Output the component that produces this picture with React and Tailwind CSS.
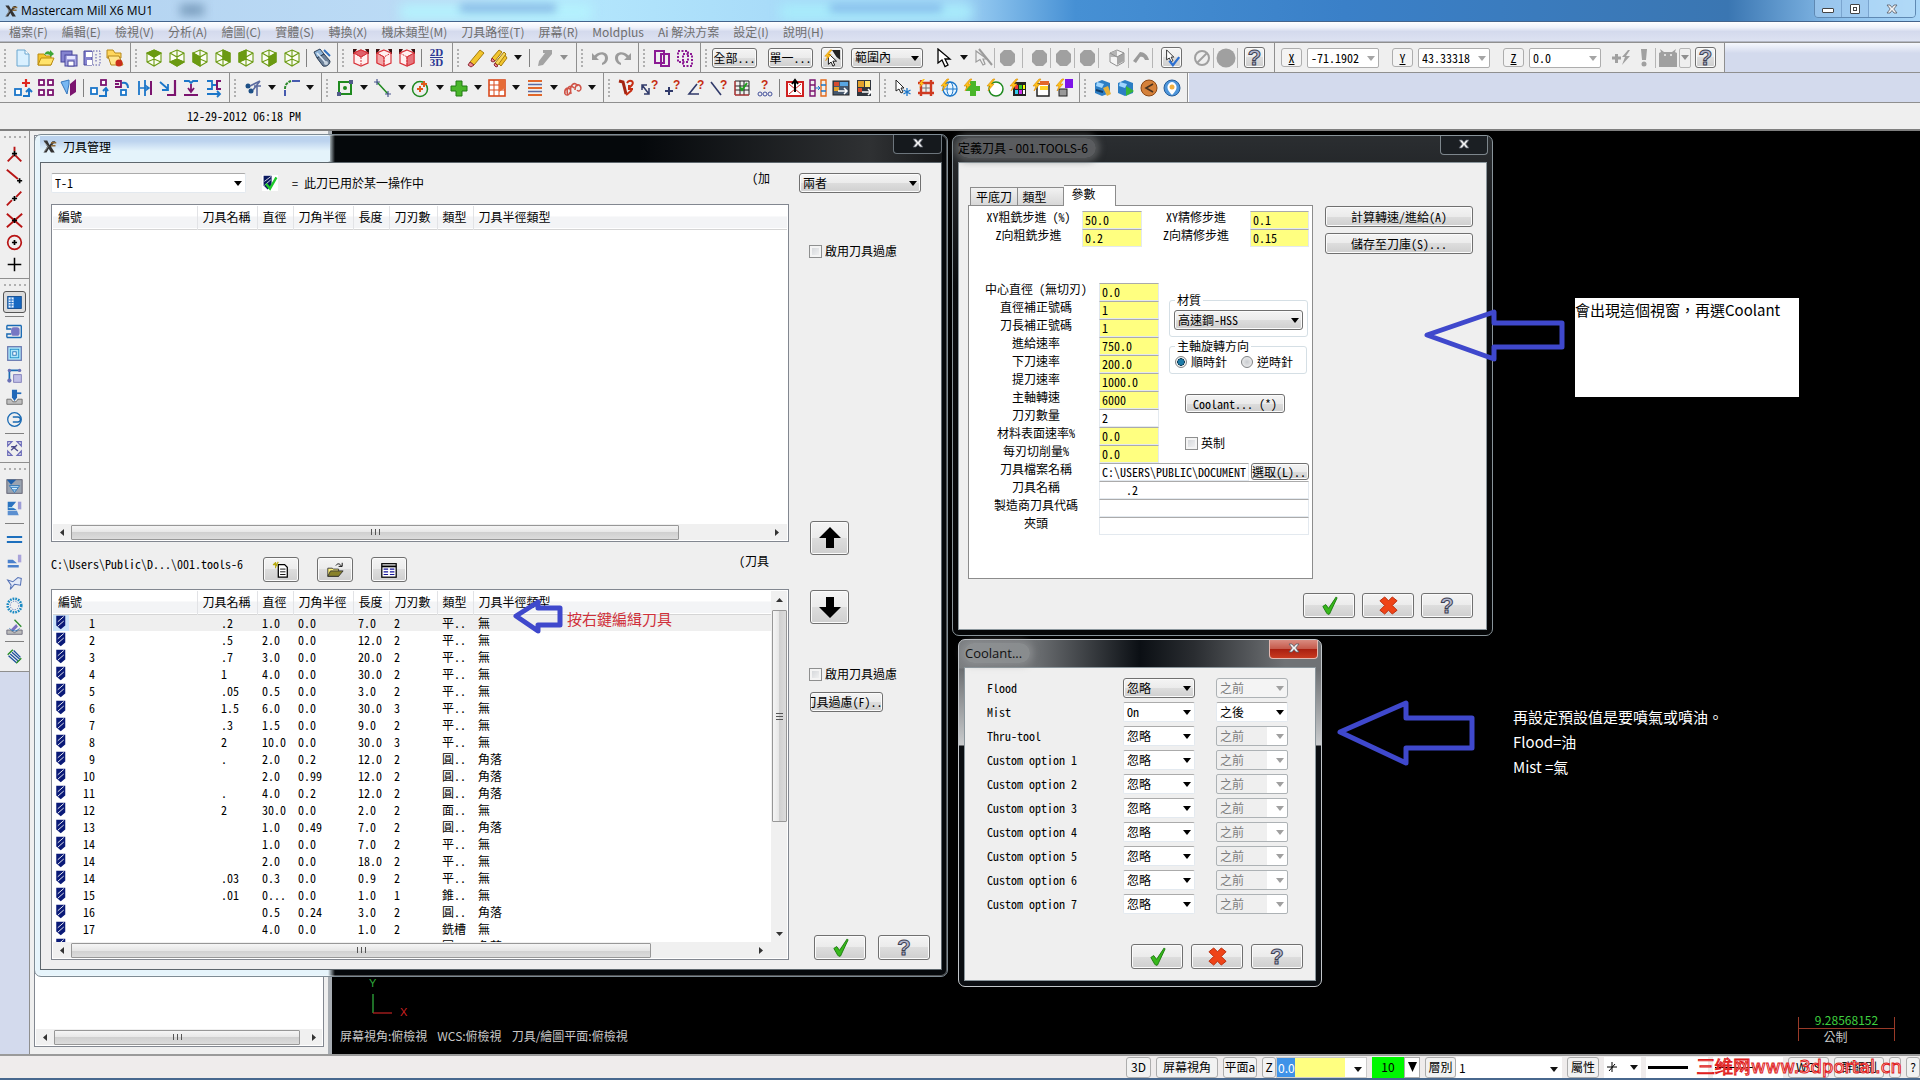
import React from "react";

const BTN =
  "border border-[#707070] rounded-[3px] bg-[linear-gradient(to_bottom,#f4f4f4_0%,#ebebeb_50%,#dddddd_50%,#cfcfcf_100%)] shadow-[inset_0_0_0_1px_#fbfbfb]";
const INPUT = "border border-[#e3e9ef] border-t-[#ababab] bg-white text-black outline-none";

/* ---------- icon drawings, all on a 20 x 20 grid ---------- */

function Ico({ children, size = 20 }) {
  return (
    <svg width={size} height={size} viewBox="0 0 20 20" fill="none" className="shrink-0" aria-hidden="true">
      {children}
    </svg>
  );
}

const FACES = {
  top: "10,2 17,5 10,9 3,5",
  bottom: "3,14 10,11 17,14 10,18",
  left: "3,5 10,9 10,18 3,14",
  right: "17,5 10,9 10,18 17,14",
  backLeft: "3,5 10,2 10,11 3,14",
  backRight: "10,2 17,5 17,14 10,11",
};

function Cube({ face, color = "#6b9a12" }) {
  return (
    <g stroke={color} strokeWidth="1.1">
      <path d="M10 2 17 5V14L10 18 3 14V5Z" fill="#fbfdf3" />
      <path d="M3 5 10 9 17 5M10 9V18M10 2V11M3 14 10 11 17 14" />
      {face && <polygon points={FACES[face]} fill={color} />}
    </g>
  );
}

function RedCube({ face }) {
  return (
    <g>
      <path d="M2 1H6L3 6H2ZM14 1H18V6H17Z" fill="#3a1212" />
      <path d="M10 2 17 5V15L10 18 3 15V5Z" fill="#fff0f0" stroke="#d8333a" strokeWidth="1.2" />
      {face === "top" && <path d="M10 2 17 5 10 9 3 5Z" fill="#e0606a" stroke="#d8333a" />}
      {face === "left" && <path d="M3 5 10 9V18L3 15Z" fill="#f2a5a8" stroke="#d8333a" />}
      {face === "right" && <path d="M10 9 17 5V15L10 18Z" fill="#e5737b" stroke="#d8333a" />}
      <path d="M3 5 10 9 17 5M10 9V18" stroke="#d8333a" strokeDasharray="2 1" />
    </g>
  );
}

const Q = ({ x = 9, y = 11 }) => (
  <text x={x} y={y} fontSize="12" fontWeight="700" fill="#c62d12" fontFamily="Liberation Sans">?</text>
);
const Bolt = () => <path d="M8 1 2 8H5L3 13 9 6H6L10 1Z" fill="#ffc21a" stroke="#d98a00" strokeWidth=".6" />;
const Sq = ({ x, y, c, s = 6 }) => <rect x={x} y={y} width={s} height={s} fill="#fff" stroke={c} strokeWidth="1.8" />;

const ICONS = {
  newDoc: <><path d="M4 2H12L16 6V18H4Z" fill="#d9f0ff" stroke="#6ba6cf" /><path d="M12 2V6H16" fill="#fff" stroke="#6ba6cf" /></>,
  open: <><path d="M2 6H8L10 8H15V17H2Z" fill="#f4c52e" stroke="#b98a10" /><path d="M5 10H18L15 17H2Z" fill="#ffe36b" stroke="#b98a10" /><path d="M8 7C10 2 13 3 14 4V2L18 6 14 9V7C12 6 10 6 8 7Z" fill="#3ea636" /></>,
  saveAll: <><rect x="2" y="3" width="11" height="11" fill="#8483cf" stroke="#48479b" /><rect x="6" y="7" width="12" height="11" fill="#a7a6e2" stroke="#48479b" /><rect x="9" y="13" width="6" height="5" fill="#fff" stroke="#48479b" /><rect x="8" y="8" width="8" height="3" fill="#e5e5ff" /></>,
  savePart: <><path d="M2 3H10V17H2Z" fill="#8584cf" stroke="#48479b" /><rect x="4" y="4" width="6" height="5" fill="#fff" /><rect x="5" y="12" width="5" height="5" fill="#fff" /><path d="M11 3H18V17H11M14 6V14" stroke="#5554a8" strokeDasharray="1.5 1.5" /></>,
  fileBox: <><path d="M2 2H8L10 5H16V10H2Z" fill="#ffd65c" stroke="#b5881c" /><path d="M3 8H14L18 17H6Z" fill="#ffe48a" stroke="#b5881c" /><circle cx="14" cy="15" r="3.5" fill="#c92d1a" /></>,
  shade: <><path d="M2 4 8 1 12 6 5 10Z" fill="#8fb4d8" stroke="#2c3f57" /><path d="M5 10 12 6 18 13C18 17 14 19 11 18Z" fill="#6d8199" stroke="#2c3f57" /><path d="M5 5 14 15" stroke="#dce8f4" strokeWidth="1.6" /><path d="M12 2 18 8" stroke="#2f70c0" strokeWidth="2" /><circle cx="14" cy="15" r="2" fill="#c6d3e0" /></>,
  pencil: <><path d="M4 14 14 2 18 5 8 17Z" fill="#f2c52d" stroke="#a57c0c" /><path d="M4 14 8 17 5 19 2 17Z" fill="#f08a92" stroke="#8c2b33" /></>,
  pencils: <><path d="M3 10 10 2 13 4 6 13Z" fill="#f2c52d" stroke="#a57c0c" /><path d="M3 10 6 13 4 14 2 13Z" fill="#f08a92" stroke="#8c2b33" /><path d="M9 15 16 7 18 10 12 18Z" fill="#f2c52d" stroke="#a57c0c" /><path d="M6 15 15 4 17 6 9 17Z" fill="#f7d759" stroke="#a57c0c" /><path d="M6 15 9 18 7 19 5 17Z" fill="#f08a92" stroke="#8c2b33" /></>,
  pencilOff: <path d="M4 13 10 5 8 5V2H17V6L8 17 3 18Z" fill="#a3a3a3" />,
  undo: <path d="M2 5V12H9L6.500 9.500C10 5 15 6 15 10C15 12 14 14 12 15V17C16 16 18 13 18 10C18 4 10 2 4.500 7.500Z" fill="#9b9b9b" />,
  redo: <path d="M18 5V12H11L13.500 9.500C10 5 5 6 5 10C5 12 6 14 8 15V17C4 16 2 13 2 10C2 4 10 2 15.500 7.500Z" fill="#9b9b9b" />,
  copy: <><rect x="3" y="3" width="9" height="12" stroke="#8b1a94" strokeWidth="2" /><rect x="9" y="6" width="8" height="12" stroke="#8b1a94" strokeWidth="2" /></>,
  copyDash: <><rect x="3" y="3" width="10" height="11" stroke="#8b1a94" strokeWidth="2" strokeDasharray="2 1.5" /><rect x="8" y="6" width="9" height="12" stroke="#8b1a94" strokeWidth="2" strokeDasharray="2 1.5" /></>,
  cursorBolt: <><path d="M10 1H19V12L15 9Z" fill="#222" /><path d="M6 5V17L9 14.500 11 19 13 18 11 13.500H15Z" fill="#fff" stroke="#000" /><Bolt /></>,
  cursor: <path d="M3 1V15L7 12 10 18.500 13 17 10 11H15Z" fill="#fff" stroke="#000" strokeWidth="1.3" />,
  cursorOff: <><path d="M3 3V14L7 11.500 10 17 12 16 10 11H14Z" stroke="#9b9b9b" strokeWidth="1.2" /><path d="M6 1 19 17" stroke="#9b9b9b" strokeWidth="2" /></>,
  blob: <path d="M7 2H14L18 6V14L14 18H7L3 14V6Z" fill="#a0a0a0" />,
  disc: <circle cx="10" cy="10" r="9.500" fill="#a0a0a0" />,
  cubeOff: <><path d="M10 2 17 5V14L10 18 3 14V5Z" stroke="#8f8f8f" fill="#f4f4f4" /><path d="M10 9V17L17 13V5Z" fill="#a5a5a5" /><path d="M10 9V2L3 5V9Z" fill="#b5b5b5" /><path d="M3 5 10 9 17 5" stroke="#8f8f8f" /></>,
  bend: <path d="M2 13 9 4C13 4 17 7 18 12H14C13 9 11 8 9 9L5 15Z" fill="#9b9b9b" />,
  pick: <><path d="M4 1V12L7 10 9 14 11 13 9 9H12Z" fill="#fff" stroke="#222" /><path d="M7 13 11 18 18 9" stroke="#2c6fd1" strokeWidth="2.500" /></>,
  noEntry: <><circle cx="10" cy="10" r="7" stroke="#a0a0a0" strokeWidth="2" /><path d="M5 15 15 5" stroke="#a0a0a0" strokeWidth="2" /></>,
  plusBolt: <><path d="M1 10H10M5.500 6V15" stroke="#a0a0a0" strokeWidth="3" /><path d="M17 2 11 9H14L11 17 19 8H15L19 2Z" fill="#a0a0a0" /></>,
  bang: <><path d="M7 1H13L12 12H8Z" fill="#a0a0a0" /><circle cx="10" cy="16" r="2.500" fill="#a0a0a0" /></>,
  device: <><path d="M1 5 3 4 2 1 6 4H14L18 1 17 4 19 5V19H1Z" fill="#a0a0a0" /><path d="M7 6V8M13 6V8" stroke="#efefef" strokeWidth="1.500" /></>,
  // transform group
  x1: <><Sq x={2} y={11} c="#1b76c9" /><path d="M10 18H16V12M13 14 16 11 19 14" stroke="#1b76c9" strokeWidth="2" /><path d="M13 1V9M9 5H17" stroke="#e0261c" strokeWidth="2.200" /></>,
  x2: <><Sq x={3} y={2} c="#7b146f" s={5} /><Sq x={12} y={2} c="#7b146f" s={5} /><Sq x={3} y={12} c="#7b146f" s={5} /><Sq x={12} y={12} c="#7b146f" s={5} /></>,
  x3: <><path d="M2 4 10 2V6L8 16 5 10Z" fill="#77b7f2" stroke="#3677bd" /><path d="M11 6 17 1V14L11 18Z" fill="#7b146f" /></>,
  x4: <><Sq x={2} y={10} c="#1b76c9" /><Sq x={12} y={2} c="#7b146f" s={5} /><path d="M10 18H17V10M14 13 17 10 19 13" stroke="#1b76c9" strokeWidth="2" /></>,
  x5: <><path d="M3 3H9V9H3M3 6H7" stroke="#7b146f" strokeWidth="1.800" /><path d="M10 5C14 4 16 6 16 10" stroke="#1b76c9" strokeWidth="2" /><Sq x={9} y={12} c="#1b76c9" s={5} /></>,
  x6: <><path d="M4 3V17M10 2V18" stroke="#1b76c9" strokeWidth="1.800" /><path d="M16 3V17" stroke="#7b146f" strokeWidth="2" /><path d="M5 10H13M10 7 14 10 10 13" stroke="#1b76c9" strokeWidth="1.500" /></>,
  x7: <><path d="M17 2V17H9" stroke="#7b146f" strokeWidth="2.200" /><path d="M2 4 10 11M10 6V12H4" stroke="#1b76c9" strokeWidth="1.800" /></>,
  x8: <><path d="M3 3H8L10 5 12 3H17" stroke="#1b76c9" strokeWidth="1.800" /><path d="M10 6V13M7 10 10 14 13 10" stroke="#7b146f" strokeWidth="1.800" /><path d="M3 17H17" stroke="#7b146f" strokeWidth="2" /></>,
  x9: <><path d="M3 3H8V11H3M8 7H12" stroke="#1b76c9" strokeWidth="1.800" /><path d="M17 3H13V11H17" stroke="#7b146f" strokeWidth="2" /><path d="M3 16H16M13 13 16 16 13 19" stroke="#1b76c9" strokeWidth="1.800" /></>,
  trim: <><circle cx="5" cy="8" r="2.500" fill="#1c4f86" /><circle cx="8" cy="13" r="2.500" fill="#1c4f86" /><path d="M7 8 17 3M10 12 17 3M14 8V18M11 8H18" stroke="#5b6ba0" strokeWidth="1.600" /></>,
  fillet: <><path d="M4 18V12" stroke="#334aa8" strokeWidth="1.800" /><path d="M4 11C4 6 7 4 10 3" stroke="#2d8a2c" strokeWidth="2" strokeDasharray="3 1" /><path d="M11 3H19" stroke="#334aa8" strokeWidth="1.800" /></>,
  // create group
  rect: <><path d="M4 4V16H16V4Z" stroke="#1f8a1f" strokeWidth="2" /><rect x="2" y="14" width="4" height="4" fill="#505a8a" /><rect x="14" y="2" width="4" height="4" fill="#505a8a" /><circle cx="10" cy="10" r="2" fill="#1f8a1f" /></>,
  line: <><path d="M4 4 15 16" stroke="#1f8a1f" strokeWidth="1.500" /><path d="M1 4H7M4 1V7M12 16H18M15 13V19" stroke="#4a5690" strokeWidth="1.200" /></>,
  circle: <><circle cx="9" cy="11" r="7.500" stroke="#1f8a1f" strokeWidth="1.500" /><path d="M9 8V14M6 11H12M13 3V9M10 6H16" stroke="#e05a1a" strokeWidth="2" /></>,
  plus: <path d="M7 3H13V8H18V13H13V18H7V13H2V8H7Z" fill="#49b62a" stroke="#217a12" />,
  mesh: <><rect x="2" y="2" width="16" height="16" fill="#fff" stroke="#d94a1d" strokeWidth="1.600" /><path d="M2 7H18M2 12H18M7 2V18M12 2V18" stroke="#d94a1d" /><path d="M12 2H18V10L12 14Z" fill="#e66c37" /></>,
  levels: <><path d="M3 3H17M3 10H17M3 17H17" stroke="#e2672a" strokeWidth="2" /><path d="M3 6.500H17M3 13.500H17" stroke="#5b6ba0" strokeWidth="1.400" /></>,
  spring: <><path d="M2 16C1 11 4 9 7 11M5 17C2 9 8 6 11 10M8 16C6 6 12 3 15 8M12 12C12 6 17 5 18 10" stroke="#d05246" strokeWidth="1.600" /><path d="M2 16C4 18 7 17 7 14M14 12C15 14 18 13 18 10" stroke="#d05246" strokeWidth="1.400" /></>,
  // analyze group
  a1: <><path d="M2 3 6 4 9 16" stroke="#a5230f" strokeWidth="3" /><path d="M9 17 15 12M10 5C12 1 18 3 15 7L12 10M12 7V11H16" stroke="#c62d12" strokeWidth="2" /></>,
  a2: <><path d="M2 7 9 16M2 12V7H7M9 10V16H4" stroke="#303a6a" strokeWidth="1.500" /><Q x={11} /></>,
  a3: <><path d="M2 13H10M6 9V17" stroke="#303a6a" strokeWidth="2" /><Q x={10} /></>,
  a4: <><path d="M11 6 3 16H13" stroke="#303a6a" strokeWidth="1.600" /><Q x={11} /></>,
  a5: <><path d="M2 4 12 17" stroke="#303a6a" strokeWidth="1.600" /><Q x={11} /></>,
  a6: <><path d="M3 3H17V17H3ZM3 8H17M3 12H17M8 3V17M12 3V17" stroke="#222" /><path d="M3 17H17M3 3V17" stroke="#d33" /><path d="M8 9 10 12 15 5" stroke="#1ea01e" strokeWidth="2" /></>,
  a7: <><circle cx="5" cy="16" r="2" stroke="#43509a" /><circle cx="10" cy="16" r="2" stroke="#43509a" /><circle cx="15" cy="16" r="2" stroke="#43509a" /><Q x={6} /></>,
  m1: <><rect x="2" y="4" width="16" height="14" fill="#fff" stroke="#cf2020" strokeWidth="2" /><path d="M4 16 16 6M4 6 16 16" stroke="#cf2020" /><path d="M10 14V3M7 6 10 2 13 6" stroke="#000" strokeWidth="2" /></>,
  m2: <><path d="M2 2H7V18H2ZM2 7H7M2 13H7" stroke="#7b146f" strokeWidth="1.400" /><path d="M13 2H18V18H13Z" stroke="#e26a1d" strokeWidth="1.400" /><path d="M13 7H18M13 13H18" stroke="#1b76c9" strokeWidth="1.400" /><path d="M7 10H12M10 8 12 10 10 12" stroke="#1b76c9" /></>,
  m3: <><rect x="2" y="3" width="16" height="14" fill="#46586e" stroke="#222" /><rect x="3" y="4" width="5" height="4" fill="#d74b2f" /><rect x="9" y="4" width="8" height="4" fill="#59a6e2" /><rect x="3" y="9" width="5" height="4" fill="#e2a12b" /><path d="M7 13H16M13 10 16 13 13 16" stroke="#fff" strokeWidth="1.500" /></>,
  m4: <><rect x="3" y="2" width="14" height="16" fill="#30363f" /><rect x="4" y="3" width="6" height="6" fill="#e2a12b" /><rect x="11" y="3" width="5" height="6" fill="#ffe36b" /><rect x="4" y="10" width="4" height="4" fill="#d74b2f" /><path d="M8 14H17M14 11 17 14 14 17" stroke="#fff" strokeWidth="1.500" /></>,
  // quick mask group
  q1: <><path d="M3 2V13L6 11 8 15 10 14 8 10H11Z" fill="#fff" stroke="#222" /><path d="M14 10V18M10.500 12 17.500 16M17.500 12 10.500 16" stroke="#1b76c9" strokeWidth="1.300" /></>,
  q2: <><path d="M5 2V18M15 2V18M2 5H18M2 15H18" stroke="#cf3a20" strokeWidth="2.400" /><path d="M10 6V14M6 10H14" stroke="#777" /><path d="M7 1 3 6H5L3 10 8 5H6L9 1Z" fill="#ffc21a" /></>,
  q3: <><circle cx="11" cy="11" r="7" stroke="#1b76c9" strokeWidth="1.300" fill="#e8f5ff" /><ellipse cx="11" cy="11" rx="3" ry="7" stroke="#1b76c9" /><path d="M4 11H18" stroke="#1b76c9" /><Bolt /></>,
  q4: <><path d="M8 3H14V8H18V13H14V18H8V13H4V8H8Z" fill="#49b62a" /><Bolt /></>,
  q5: <><circle cx="11" cy="11" r="7" stroke="#1f8a1f" strokeWidth="1.500" fill="#fff" /><Bolt /></>,
  q6: <><rect x="5" y="4" width="13" height="14" fill="#222" /><rect x="7" y="7" width="3" height="4" fill="#e33" /><rect x="11" y="7" width="3" height="4" fill="#3c3" /><rect x="15" y="7" width="2" height="4" fill="#ff0" /><rect x="7" y="12" width="3" height="4" fill="#3ce" /><rect x="11" y="12" width="3" height="4" fill="#c3e" /><rect x="15" y="12" width="2" height="4" fill="#fff" /><Bolt /></>,
  q7: <><rect x="6" y="6" width="12" height="12" fill="#fff" stroke="#222" strokeWidth="1.500" /><rect x="9" y="3" width="9" height="4" fill="#e2672a" /><rect x="9" y="8" width="8" height="4" fill="#ffd428" /><Bolt /></>,
  q8: <><rect x="11" y="1" width="8" height="9" fill="#7d12e8" /><rect x="5" y="11" width="8" height="7" fill="#999" stroke="#222" /><Bolt /></>,
  v1: <><path d="M2 5 9 2 17 5V15L9 18 2 15Z" fill="#2c7ec4" /><path d="M4 4 11 6 9 10 3 8Z" fill="#9fd6ff" /><path d="M10 10 15 8 18 16 14 18Z" fill="#e7b13a" /><path d="M3 12 10 14" stroke="#103c68" strokeWidth="2" /></>,
  v2: <><path d="M2 5 9 2 17 5V15L9 18 2 15Z" fill="#2c7ec4" /><path d="M4 4 11 6 9 10 3 8Z" fill="#9fd6ff" /><path d="M10 8 18 13 10 18Z" fill="#35b53a" /></>,
  v3: <><circle cx="10" cy="10" r="8" fill="#d5813a" stroke="#8b4714" /><path d="M14 6 7 10 14 14" stroke="#4a3320" strokeWidth="1.600" /></>,
  v4: <><circle cx="10" cy="10" r="8" fill="#4d95da" stroke="#245c99" /><path d="M10 17C5 12 5 9 6 7C8 3 12 3 14 7C15 9 15 12 10 17Z" fill="#fff" /><circle cx="10" cy="9" r="2.500" fill="#f0b040" /></>,
  // left dock
  d1: <><path d="M10 1V6M9 11 2 18M11 11 18 18" stroke="#b81414" strokeWidth="2.200" /><path d="M7 9H13M10 6V12" stroke="#000" strokeWidth="2" /></>,
  d2: <><path d="M1 2 14 13" stroke="#b81414" strokeWidth="2.200" /><path d="M13 15H19M16 12V18" stroke="#000" strokeWidth="2" /></>,
  d3: <><path d="M1 18 7 12M12 8 18 2" stroke="#b81414" strokeWidth="2.200" /><path d="M7 10H13M10 7V13" stroke="#000" strokeWidth="2" /></>,
  d4: <><path d="M1 2 19 18M1 18 19 2" stroke="#b81414" strokeWidth="2.200" /><path d="M7 10H13M10 7V13" stroke="#000" strokeWidth="2" /></>,
  d5: <><circle cx="10" cy="10" r="8" stroke="#b81414" strokeWidth="2" /><path d="M7 10H13M10 7V13" stroke="#000" strokeWidth="2" /></>,
  d6: <path d="M2 10H18M10 2V18" stroke="#000" strokeWidth="1.800" />,
  e1: <><rect x="2" y="3" width="16" height="14" fill="#1668c2" stroke="#0a468c" /><rect x="3" y="4" width="6" height="12" fill="#e9f3ff" /><path d="M3 7H9M3 10H9M3 13H9M6 4V16" stroke="#1668c2" /></>,
  e2: <><path d="M1 3H18M1 17H18M1 3V7H6M1 17V13H6M18 3V17" stroke="#1a6ab3" strokeWidth="1.600" /><rect x="6" y="5" width="10" height="10" rx="3" fill="#7777c4" /></>,
  e3: <><rect x="2" y="2" width="16" height="16" fill="#aee6fa" stroke="#6a7ab0" strokeWidth="1.500" /><rect x="5" y="5" width="10" height="10" stroke="#1a8ac3" /><rect x="8" y="8" width="4" height="4" fill="#fff" stroke="#1a6ab3" /></>,
  e4: <><path d="M4 17V4H15" stroke="#1a6ab3" strokeWidth="2" /><circle cx="4" cy="4" r="2" fill="#6a70b5" /><circle cx="16" cy="4" r="2" fill="#6a70b5" /><circle cx="4" cy="16" r="2.500" fill="#6a70b5" /><rect x="9" y="9" width="9" height="9" fill="#c0bfe6" stroke="#7875b5" /></>,
  e5: <><path d="M1 12H6L8 15H12L14 12H19V18H1Z" fill="#bfbfbf" stroke="#666" /><path d="M7 1H13V10L10 14 7 10Z" fill="#2168b8" /><path d="M13 5H18" stroke="#2168b8" strokeWidth="2" /></>,
  e6: <><circle cx="10" cy="10" r="8" stroke="#1a6ab3" strokeWidth="1.500" /><path d="M8 7H14C18 7 18 13 14 13H8" stroke="#1a6ab3" strokeWidth="1.800" /></>,
  e7: <><path d="M2 2H7L2 7ZM18 2H13L18 7ZM2 18H7L2 13ZM18 18H13L18 13Z" stroke="#6a6ab8" strokeWidth="1.400" /><path d="M6 12 13 6M8 8 14 13M6 8H12" stroke="#4a4a8a" strokeWidth="1.600" /></>,
  f1: <><rect x="1" y="2" width="18" height="16" fill="#9aa3b0" stroke="#556" /><path d="M1 2H12L6 8Z" fill="#1e5faa" /><path d="M4 9H16L10 17Z" fill="#d7efff" stroke="#1a6ab3" /><path d="M6 11H14M8 14H12" stroke="#1a6ab3" /></>,
  f2: <><path d="M2 2H12L7 8 13 12H2Z" fill="#2b74c0" /><path d="M2 13H13L15 18H2Z" fill="#5b8fd0" /><rect x="14" y="2" width="4" height="9" fill="#9c9cd6" /><path d="M3 9 11 9" stroke="#dff" /></>,
  f3: <path d="M1 7H19M1 13H19" stroke="#1c6fbd" strokeWidth="2.400" />,
  f4: <><path d="M2 8H8L13 12H2ZM2 14H15V17H2Z" fill="#4a80cc" /><rect x="14" y="2" width="4" height="9" fill="#a9a3da" /></>,
  f5: <path d="M2 6 8 8 14 3 18 4 17 12 10 11 5 17 6 12Z" fill="#e3eaf8" stroke="#5673b6" strokeWidth="1.200" />,
  f6: <><circle cx="10" cy="10" r="8" stroke="#1a8ac3" strokeWidth="3" strokeDasharray="2 1.200" /><circle cx="10" cy="10" r="5" stroke="#4a6ab3" strokeDasharray="1.500 1.500" /></>,
  f7: <><path d="M1 13H5L10 16 15 13H19V18H1Z" fill="#bbb" stroke="#667" /><path d="M6 12 12 6 14 9 9 14Z" fill="#7a72c0" /><path d="M10 1 18 9" stroke="#2c8a2c" strokeWidth="1.600" /><path d="M4 11C8 15 12 15 16 11" stroke="#1a6ab3" /></>,
  f8: <><path d="M2 8 8 2M12 18 18 12" stroke="#1f8a1f" strokeWidth="1.500" /><path d="M3 9 12 17M5 7 14 15M7 5 16 13M9 3 17 11" stroke="#1d4f9c" strokeWidth="1.500" /></>,
  tool: <><path d="M3 1H15V14L9 19 3 14Z" fill="#0a1a78" /><path d="M5 9 13 2M5 15 13 8" stroke="#fff" strokeWidth="1.200" /></>,
  toolCheck: <><rect width="20" height="20" fill="#fff" /><path d="M2 1H12V13L7 18 2 13Z" fill="#0a1a60" /><path d="M3 8 11 2M3 13 11 6" stroke="#fff" strokeWidth="1" /><path d="M5 11 10 17 18 3" stroke="#1fc92b" strokeWidth="3" /></>,
  newTool: <><path d="M7 4H14L17 7V18H7Z" fill="#fff" stroke="#000" strokeWidth="1.400" /><path d="M9 9H15M9 12H15M9 15H15" stroke="#000" /><path d="M1 4H6M4 1V8M2 2 6 6M7 1 5 4" stroke="#b6a90c" strokeWidth="1.200" /></>,
  openTool: <><path d="M2 8H7L8 9H14V17H2Z" fill="#fff27a" stroke="#333" /><path d="M5 11H19L14 17H2Z" fill="#88822a" stroke="#333" /><path d="M11 5C13 2 16 3 17 6M14 6H18V2" stroke="#000" /></>,
  listTool: <><rect x="2" y="3" width="16" height="15" fill="#fff" stroke="#000" strokeWidth="1.400" /><path d="M2 6H18" stroke="#000" strokeWidth="2" /><path d="M4 9H9M11 9H16M4 12H9M11 12H16M4 15H9M11 15H16" stroke="#15159a" strokeWidth="1.300" /></>,
  ok: <path d="M3 11 6 9 9 13 17 1 18 2 10 19Q8 20 7 18Z" fill="#37b81b" stroke="#1e7d10" />,
  cancel: <path d="M6 1 10 5 14 1 19 5 14 10 19 15 14 19 10 15 6 19 1 15 6 10 1 5Z" fill="#ef4418" stroke="#b82a0a" />,
  logo: <><path d="M2 2H7L10 8 14 3H18L12 10 17 18H12L9 13 6 18H2L7 10Z" fill="#333" /><path d="M3 4 8 10 3 17" stroke="#aaa" /><path d="M12 5H19M12 9H18" stroke="#8d6b3a" strokeWidth="2" /></>,
};

const I = ({ n, size }) => <Ico size={size}>{ICONS[n]}</Ico>;

function Tri({ color = "#111" }) {
  return (
    <svg width="8" height="5" viewBox="0 0 8 5" aria-hidden="true" className="shrink-0">
      <path d="M0 0H8L4 5Z" fill={color} />
    </svg>
  );
}

/* ---------- toolbars ---------- */

const Cell = ({ label, children }) => (
  <button aria-label={label} className="flex h-6 w-[23px] shrink-0 items-center justify-center">{children}</button>
);
const Drop = ({ w = "w-[15px]", color }) => (
  <button aria-label="more" className={`flex h-6 shrink-0 items-center justify-center ${w}`}><Tri color={color} /></button>
);
const Bar = () => <span className="mx-[3px] h-[18px] w-px shrink-0 bg-[#808080]" />;
const Thin = () => <span className="h-5 w-px shrink-0 bg-[#b5b5b5]" />;

function Group({ children }) {
  return (
    <div className="flex h-full shrink-0 items-center border-r border-[#8f8f8f] bg-[#efefef] pr-1 pl-1 shadow-[1px_0_0_#fff]">
      <span className="mr-[5px] h-[18px] w-[2px] shrink-0 bg-[repeating-linear-gradient(to_bottom,#b0b0b0_0_2px,#efefef_2px_4px)]" />
      {children}
    </div>
  );
}

const icons = (list) => list.map((n) => <Cell key={n} label={n}><I n={n} /></Cell>);
const drops = (list) => list.map((n) => <React.Fragment key={n}><Cell label={n}><I n={n} /></Cell><Drop /></React.Fragment>);

function HelpMark({ size = "text-[22px]" }) {
  return <span className={`font-[Liberation_Sans] font-bold leading-none text-[#b4b8d0] [-webkit-text-stroke:1px_#3c3f52] ${size}`}>?</span>;
}

function AxisField({ axis, value }) {
  return (
    <div className="flex shrink-0 items-center gap-[5px]">
      <button className="h-[19px] w-[21px] rounded-[3px] border border-[#adadad] bg-[#f4f4f4] text-center leading-4 underline">{axis}</button>
      <span className="relative flex h-5 w-[72px] items-center">
        <input aria-label={`${axis} coordinate`} defaultValue={value} className="h-5 w-full rounded-[2px] border border-[#adadad] bg-white pl-[3px] outline-none" />
        <span className="absolute right-1 top-2"><Tri color="#a5a5a5" /></span>
      </span>
    </div>
  );
}

function TopBars() {
  const menu = ["檔案(F)", "編輯(E)", "檢視(V)", "分析(A)", "繪圖(C)", "實體(S)", "轉換(X)", "機床類型(M)", "刀具路徑(T)", "屏幕(R)", "Moldplus", "Ai 解決方案", "設定(I)", "說明(H)"];
  return (
    <>
      <header className="relative flex h-[22px] shrink-0 items-center overflow-hidden border-b border-[#44648c] bg-[linear-gradient(to_right,#b3d2f0_0,#bcdcf6_24%,#b5e8fd_28%,#a9dcf9_40%,#a0d2f5_50%,#4690d4_56%,#3a80c8_70%,#3a76b2_90%,#8cc0ec_96%,#a9d6f8_100%)] px-1">
        <span className="absolute top-1 left-[180px] h-3 w-6 bg-[#7da0c0] blur-[5px]" />
        <span className="absolute top-1 left-[400px] h-4 w-48 bg-[#b4f2fd] blur-[6px]" />
        <span className="absolute top-1 left-[780px] h-4 w-48 bg-[#a8ecfb] blur-[6px]" />
        <span className="absolute top-1 left-[460px] h-2 w-24 bg-[#84b4e4] blur-[4px]" />
        <span className="absolute top-1 left-[830px] h-2 w-28 bg-[#84b8ea] blur-[4px]" />
        <I n="logo" size={14} />
        <h1 className="relative ml-[3px] text-[12px] leading-5 font-[Open_Sans] text-black">Mastercam Mill X6 MU1</h1>
        <div className="relative -mt-1 ml-auto flex h-[19px] overflow-hidden rounded-b-[4px] border border-[#5f89b3]">
          <button aria-label="minimize" className="flex w-[27px] items-center justify-center border-r border-[#7ba5cf] bg-[#a4ccf0]/70"><span className="mt-1 h-[5px] w-3 rounded-[1px] border border-[#444] bg-white" /></button>
          <button aria-label="restore" className="flex w-[27px] items-center justify-center border-r border-[#7ba5cf] bg-[#a4ccf0]/70"><span className="h-[10px] w-[10px] rounded-[1px] border border-[#444] bg-white p-[2px]"><span className="block h-full border border-[#444]" /></span></button>
          <button aria-label="close" className="flex w-[46px] items-center justify-center bg-[#b5dcf8]/70"><CloseX /></button>
        </div>
      </header>
      <nav className="flex h-5 shrink-0 items-center gap-[14px] border-b border-[#b4b8c4] bg-[linear-gradient(to_bottom,#ffffff,#eef1fa_30%,#d4daed_50%,#dde2f2)] pl-[9px] text-[12px] leading-[18px] text-[#6e6e6e]">
        {menu.map((m) => <button key={m} className="whitespace-nowrap">{m}</button>)}
      </nav>
      <div className="flex h-[31px] shrink-0 overflow-hidden border-t border-b border-[#8f8f8f] bg-[linear-gradient(to_bottom,#f6f8fd,#d3daed_35%)] text-[12px] [font-feature-settings:'hwid']">
        <Group>{icons(["newDoc", "open", "saveAll", "savePart", "fileBox"])}</Group>
        <Group>
          {["top", "bottom", "left", "backRight", "backLeft", "right", ""].map((f) => <Cell key={f} label={`view ${f}`}><Ico><Cube face={f} /></Ico></Cell>)}
          <Bar />
          {icons(["shade"])}
        </Group>
        <Group>
          {["top", "left", "right"].map((f) => <Cell key={f} label={`plane ${f}`}><Ico><RedCube face={f} /></Ico></Cell>)}
          <Bar />
          <button className="flex w-[23px] shrink-0 flex-col items-center font-[Liberation_Serif] text-[11px] leading-[9px] font-bold text-[#2a3794]">
            <span className="border-b border-[#2a3794]">2D</span><span>3D</span>
          </button>
        </Group>
        <Group>{icons(["pencil", "pencils"])}<Drop w="w-4" /><Bar />{icons(["pencilOff"])}<Drop w="w-4" color="#8f8f8f" /></Group>
        <Group>{icons(["undo", "redo"])}</Group>
        <Group>{icons(["copy", "copyDash"])}</Group>
        <Group>
          <button className={`h-5 w-[45px] shrink-0 text-center leading-4 ${BTN}`}>全部...</button>
          <button className={`ml-[11px] h-5 w-[45px] shrink-0 text-center leading-4 ${BTN}`}>單一...</button>
          <button aria-label="select mode" className={`mr-2 ml-2 flex h-[22px] w-[22px] shrink-0 items-center justify-center ${BTN}`}><I n="cursorBolt" size={18} /></button>
          <Select label="window" value="範圍內" w="w-[72px]" raised />
          <span className="w-[10px]" />
          {icons(["cursor"])}<Drop />
          {icons(["cursorOff"])}<Thin />{icons(["blob"])}<span className="w-1" /><Thin />
          <span className="w-1" />
          {[0, 1, 2].map((k) => <React.Fragment key={k}>{icons(["blob"])}<Thin /></React.Fragment>)}
          <span className="w-[6px]" />
          {icons(["cubeOff"])}<Thin />{icons(["bend"])}<Thin />
          <button aria-label="verify" className={`mr-1 ml-2 flex h-[21px] w-[21px] shrink-0 items-center justify-center ${BTN}`}><I n="pick" size={18} /></button>
          <span className="w-1" />
          {icons(["noEntry"])}<Thin />{icons(["disc"])}<Thin />
          <button aria-label="help" className={`ml-[6px] mr-[5px] flex h-[21px] w-[21px] shrink-0 items-center justify-center ${BTN}`}><HelpMark /></button>
        </Group>
        <div className="flex h-full shrink-0 items-center border-r border-[#8f8f8f] bg-[#efefef] pr-2 pl-[6px]">
          <div className="flex gap-[13px]"><AxisField axis="X" value="-71.1902" /><AxisField axis="Y" value="43.33318" /><AxisField axis="Z" value="0.0" /></div>
          <span className="w-2" />
          {icons(["plusBolt", "bang"])}<Thin />{icons(["device"])}
          <button aria-label="device list" className="mr-1 flex h-5 w-3 items-center justify-center rounded-[2px] border border-[#b5b5b5]"><Tri color="#8f8f8f" /></button>
          <button aria-label="help" className={`flex h-[21px] w-[21px] items-center justify-center ${BTN}`}><HelpMark /></button>
        </div>
      </div>
      <div className="flex h-[30px] shrink-0 overflow-hidden border-b border-[#8f8f8f] bg-[#d3daed]">
        <Group>{icons(["x1", "x2", "x3"])}<Bar />{icons(["x4", "x5", "x6", "x7", "x8", "x9"])}</Group>
        <Group>{drops(["trim", "fillet"])}</Group>
        <Group>{drops(["rect", "line", "circle", "plus", "mesh", "levels", "spring"])}</Group>
        <Group>{icons(["a1", "a2", "a3", "a4", "a5", "a6", "a7"])}<Bar />{icons(["m1", "m2", "m3", "m4"])}</Group>
        <Group>{icons(["q1", "q2", "q3", "q4", "q5", "q6", "q7", "q8"])}</Group>
        <Group>{icons(["v1", "v2", "v3", "v4"])}</Group>
      </div>
      <div className="h-7 shrink-0 border-b-2 border-[#7f7f7f] bg-[#efefef] pl-[187px] text-[12px] leading-[25px] text-black [font-feature-settings:'hwid']">12-29-2012 06:18 PM</div>
    </>
  );
}

/* ---------- shared controls ---------- */

function CloseX() {
  return (
    <svg width="12" height="10" viewBox="0 0 12 10" aria-hidden="true">
      <path d="M1 1H4L6 3.500 8 1H11L7.800 5 11 9H8L6 6.500 4 9H1L4.200 5Z" fill="#f4f4f4" stroke="#555a66" strokeWidth=".8" />
    </svg>
  );
}

function Select({ label, value, w, raised, disabled, white }) {
  let look = `${INPUT} rounded-[2px]`;
  if (raised) look = BTN;
  if (raised && disabled) look = "border border-[#adb2b5] rounded-[3px] bg-[#f4f4f4]";
  if (!raised && disabled) look = "border border-[#adb2b5] rounded-[2px] bg-[linear-gradient(to_right,#efefef_50px,#fff_50px)]";
  if (white) look = "border border-[#e3e9ef] border-t-[#ababab] rounded-[2px] bg-white";
  return (
    <span className={`relative block h-5 shrink-0 ${w}`}>
      <select aria-label={label} disabled={disabled} defaultValue={value} className={`h-5 w-full appearance-none pb-px pl-[3px] text-[12px] leading-4 outline-none ${disabled ? "text-[#7d7d7d]" : "text-black"} ${look}`}>
        <option>{value}</option>
      </select>
      <span className="pointer-events-none absolute top-2 right-1"><Tri color={disabled ? "#a0a0a0" : "#000"} /></span>
    </span>
  );
}

function Check({ label }) {
  return (
    <label className="flex h-4 items-center gap-[3px] whitespace-nowrap leading-4">
      <input type="checkbox" className="h-[13px] w-[13px] appearance-none border border-[#8e8f8f] bg-[linear-gradient(135deg,#cfd2d6,#f6f6f6)] shadow-[inset_0_0_0_2px_#f4f4f4]" />
      {label}
    </label>
  );
}

const ActionBtn = ({ kind }) => (
  <button aria-label={kind} className={`flex h-[25px] w-[52px] items-center justify-center ${BTN}`}>
    {kind === "help" ? <HelpMark /> : <I n={kind} size={19} />}
  </button>
);

function HScroll({ thumb, end }) {
  return (
    <div className="flex h-4 w-full items-center bg-[#f0f0f0]">
      <span className="flex w-[18px] shrink-0 justify-center"><svg width="4" height="7" viewBox="0 0 4 7"><path d="M4 0V7L0 3.500Z" fill="#333" /></svg></span>
      <span className={`flex h-[15px] items-center justify-center gap-px border border-[#979797] rounded-[1px] bg-[linear-gradient(to_bottom,#f5f5f5,#e6e6e6_50%,#d0d0d0_50%,#dcdcdc)] ${thumb}`}>
        {[0, 1, 2].map((k) => <span key={k} className="mx-[1px] h-[6px] w-px bg-[#555]" />)}
      </span>
      <span className={`ml-auto flex justify-center ${end}`}><svg width="4" height="7" viewBox="0 0 4 7"><path d="M0 0V7L4 3.500Z" fill="#333" /></svg></span>
    </div>
  );
}

/* ---------- tool manager window ---------- */

const COLS = ["w-[144px]", "w-[60px]", "w-[36px]", "w-[60px]", "w-[36px]", "w-[48px]", "w-[36px]", "w-auto"];
const HEADS = ["編號", "刀具名稱", "直徑", "刀角半徑", "長度", "刀刃數", "類型", "刀具半徑類型"];
const ROWS = [
  ["1", ".2", "1.0", "0.0", "7.0", "2", "平..", "無"],
  ["2", ".5", "2.0", "0.0", "12.0", "2", "平..", "無"],
  ["3", ".7", "3.0", "0.0", "20.0", "2", "平..", "無"],
  ["4", "1", "4.0", "0.0", "30.0", "2", "平..", "無"],
  ["5", ".05", "0.5", "0.0", "3.0", "2", "平..", "無"],
  ["6", "1.5", "6.0", "0.0", "30.0", "3", "平..", "無"],
  ["7", ".3", "1.5", "0.0", "9.0", "2", "平..", "無"],
  ["8", "2", "10.0", "0.0", "30.0", "3", "平..", "無"],
  ["9", ".", "2.0", "0.2", "12.0", "2", "圓..", "角落"],
  ["10", "", "2.0", "0.99", "12.0", "2", "圓..", "角落"],
  ["11", ".", "4.0", "0.2", "12.0", "2", "圓..", "角落"],
  ["12", "2", "30.0", "0.0", "2.0", "2", "面..", "無"],
  ["13", "", "1.0", "0.49", "7.0", "2", "圓..", "角落"],
  ["14", "", "1.0", "0.0", "7.0", "2", "平..", "無"],
  ["14", "", "2.0", "0.0", "18.0", "2", "平..", "無"],
  ["14", ".03", "0.3", "0.0", "0.9", "2", "平..", "無"],
  ["15", ".01", "0...", "0.0", "1.0", "1", "錐..", "無"],
  ["16", "", "0.5", "0.24", "3.0", "2", "圓..", "角落"],
  ["17", "", "4.0", "0.0", "1.0", "2", "銑槽", "無"],
  ["", "", "", "", "", "", "圓..", "角落"],
];

function ToolTable({ rows }) {
  return (
    <table className="w-full table-fixed border-collapse text-left">
      <colgroup>{COLS.map((c, i) => <col key={i} className={c} />)}</colgroup>
      <thead>
        <tr className="h-[23px] border-b border-[#d5d5d5] bg-[linear-gradient(to_bottom,#fff_45%,#f3f4f6_50%)] leading-4">
          {HEADS.map((h, i) => <th key={h} className={`p-0 pb-px pl-[5px] font-normal whitespace-nowrap ${i < 7 ? "border-r border-[#e2e3e6]" : ""}`}>{h}</th>)}
        </tr>
      </thead>
      <tbody>
        {rows.map((r, i) => (
          <tr key={i} className={`h-[17px] leading-4 ${i === 0 ? "bg-[#efefef]" : ""}`}>
            {r.map((c, j) => j === 0 ? (
              <td key={j} className="p-0">
                <span className="flex h-4 items-center">
                  <span className={`flex h-4 w-4 items-center justify-center ${i === 0 ? "bg-[#cce4fa]" : ""}`}><I n="tool" size={15} /></span>
                  <span className="w-[26px] text-right">{c}</span>
                </span>
              </td>
            ) : (
              <td key={j} className={`p-0 whitespace-nowrap ${j === 1 ? "pl-6" : "pl-[5px]"}`}>{c}</td>
            ))}
          </tr>
        ))}
      </tbody>
    </table>
  );
}

function BigArrow({ down }) {
  return (
    <button aria-label={down ? "move down" : "move up"} className={`flex h-[34px] w-[39px] items-center justify-center ${BTN}`}>
      <svg width="22" height="22" viewBox="0 0 22 22" aria-hidden="true">
        <path d={down ? "M7 1H15V11H22L11 22 0 11H7Z" : "M11 0 22 11H15V21H7V11H0Z"} fill="#000" />
      </svg>
    </button>
  );
}

function ToolManager() {
  return (
    <section className="absolute top-[3px] left-[34px] w-[914px] rounded-[7px] border border-[#7e8b94] bg-[linear-gradient(to_right,#e6f4fb_0,#e6f4fb_293px,#05080b_300px,#05080b_100%)] px-[5px] pb-[6px] shadow-[inset_0_0_0_1px_rgba(255,255,255,0.3)]">
      <div className="flex h-[27px] items-start rounded-t-md bg-[linear-gradient(to_right,transparent_600px,#2f3133_830px,#17191b)]">
        <div className="mt-px flex h-[25px] w-[290px] items-center gap-[6px] bg-[linear-gradient(to_bottom,#bcd3ee_20%,#e4f3fb_60%)] pb-1 pl-[2px]">
          <I n="logo" size={15} />
          <h2 className="text-[12px] leading-5 text-black">刀具管理</h2>
        </div>
        <button aria-label="close" className="ml-auto flex h-[19px] w-[49px] items-center justify-center rounded-b-[4px] border border-t-0 border-[#6c757c] bg-[#15191d] pb-[3px]"><CloseX /></button>
      </div>
      <div className="flex border border-[#5e676d] bg-[#efefef] pt-[10px] pr-[11px] pb-[9px] pl-[10px]">
        <div className="w-[738px] shrink-0">
          <div className="flex h-5 items-center">
            <Select label="machine group" value="T-1" w="w-[195px]" white />
            <span className="ml-4"><I n="toolCheck" size={16} /></span>
            <span className="ml-[14px]">= 此刀已用於某一操作中</span>
            <span className="mr-[19px] mb-[10px] ml-auto">(加</span>
          </div>
          <div className="mt-[11px] flex h-[338px] flex-col justify-between border border-[#828790] bg-white p-px">
            <ToolTable rows={[]} />
            <HScroll thumb="w-[608px]" end="w-4 mr-[2px]" />
          </div>
          <div className="flex h-[47px] items-center">
            <span className="mb-1 w-[212px]">{"C:\\Users\\Public\\D...\\001.tools-6"}</span>
            <div className="mt-2 flex gap-[18px]">
              {["newTool", "openTool", "listTool"].map((n) => <button key={n} aria-label={n} className={`flex h-[25px] w-[36px] items-center justify-center ${BTN}`}><I n={n} size={18} /></button>)}
            </div>
            <span className="mr-5 mb-[10px] ml-auto">(刀具</span>
          </div>
          <div className="h-[371px] border border-[#828790] bg-white p-px">
            <div className="flex h-[351px]">
              <div className="min-w-0 flex-1 overflow-hidden"><ToolTable rows={ROWS} /></div>
              <div className="flex w-4 shrink-0 flex-col items-center bg-[#f0f0f0]">
                <svg width="7" height="4" viewBox="0 0 7 4" className="mt-[7px] mb-2"><path d="M0 4H7L3.500 0Z" fill="#333" /></svg>
                <span className="flex h-[212px] w-[15px] flex-col items-center justify-center gap-[2px] rounded-[1px] border border-[#979797] bg-[linear-gradient(to_right,#f5f5f5,#e6e6e6_50%,#d0d0d0_50%,#dcdcdc)]">
                  {[0, 1, 2].map((k) => <span key={k} className="h-px w-[7px] bg-[#555]" />)}
                </span>
                <svg width="7" height="4" viewBox="0 0 7 4" className="mt-auto mb-[6px]"><path d="M0 0H7L3.500 4Z" fill="#333" /></svg>
              </div>
            </div>
            <HScroll thumb="w-[580px]" end="w-4 mr-[18px]" />
          </div>
        </div>
        <div className="flex flex-1 flex-col items-start pl-[10px]">
          <Select label="filter" value="兩者" w="w-[122px]" raised />
          <div className="mt-[50px] ml-[10px]"><Check label="啟用刀具過慮" /></div>
          <div className="mt-[262px] ml-[11px] flex flex-col gap-[35px]"><BigArrow /><BigArrow down /></div>
          <div className="mt-[42px] ml-[10px]"><Check label="啟用刀具過慮" /></div>
          <button className={`mt-[10px] ml-[11px] flex h-5 w-[73px] items-center justify-center overflow-hidden whitespace-nowrap leading-4 ${BTN}`}>刀具過慮(F)...</button>
          <div className="mt-auto flex gap-3 self-end"><ActionBtn kind="ok" /><ActionBtn kind="help" /></div>
        </div>
      </div>
    </section>
  );
}

/* ---------- define tool window ---------- */

const Y = "bg-[#ffff80]";

function Field({ label, value, wide, plain }) {
  return (
    <label className="flex h-[18px] items-start">
      <span className="w-[130px] shrink-0 pl-1 text-center leading-3 whitespace-nowrap">{label}</span>
      <input defaultValue={value} className={`h-[18px] px-[2px] outline-none border border-[#e3e9ef] border-t-[#ababab] whitespace-pre ${wide ? "min-w-0 flex-1" : "w-[60px]"} ${plain ? "bg-white" : Y}`} />
    </label>
  );
}

function DefineTool() {
  return (
    <section className="absolute top-1 left-[952px] w-[541px] rounded-[7px] border border-[#89949a] bg-[linear-gradient(to_bottom,#2b2e31,#0a0c0e_30%,#050607)] px-[5px] pb-[5px]">
      <div className="flex h-[26px] items-start justify-between">
        <h2 className="mt-[2px] rounded-full bg-[#6f7173]/70 pr-2 text-[12px] leading-5 text-black shadow-[0_0_6px_4px_rgba(111,113,115,0.6)] [font-feature-settings:normal]">定義刀具 - 001.TOOLS-6</h2>
        <button aria-label="close" className="mr-[-1px] flex h-[19px] w-[48px] items-center justify-center rounded-b-[4px] border border-t-0 border-[#7d868c] bg-[#1b1f23] pb-[2px]"><CloseX /></button>
      </div>
      <div className="border border-[#8b969c] bg-[#efefef]">
        <div className="flex items-start pt-[22px] pr-[13px] pl-[9px]">
          <div className="w-[345px] shrink-0">
            <div role="tablist" className="flex h-5 items-end pl-[2px]">
              <button role="tab" className="h-[18px] w-[48px] border border-b-0 border-[#8c8c8c] bg-[linear-gradient(to_bottom,#f2f2f2,#d8d8d8)] leading-4">平底刀</button>
              <button role="tab" className="h-[18px] w-[46px] border border-b-0 border-l-0 border-[#8c8c8c] bg-[linear-gradient(to_bottom,#f2f2f2,#d8d8d8)] pr-3 text-center leading-4">類型</button>
              <button role="tab" aria-selected="true" className="-mb-px h-[21px] w-[52px] border border-b-0 border-l-0 border-[#8c8c8c] bg-white pr-3 pb-1 text-center leading-4">參數</button>
            </div>
            <div className="h-[374px] border border-[#8c8c8c] bg-white pt-[5px] pr-[3px]">
              <div className="grid grid-cols-[113px_60px_108px_1fr]">
                {[["XY粗銑步進 (%)", "50.0"], ["XY精修步進", "0.1"], ["Z向粗銑步進", "0.2"], ["Z向精修步進", "0.15"]].map(([l, v], k) => (
                  <label key={l} className="contents">
                    <span className={`text-center leading-3 ${k % 2 ? "" : "pl-[6px]"}`}>{l}</span>
                    <input defaultValue={v} className={`h-[18px] w-full border border-[#e3e9ef] border-t-[#ababab] px-[2px] outline-none ${Y}`} />
                  </label>
                ))}
              </div>
              <div className="mt-9 flex">
                <div className="shrink-0">
                  <Field label="中心直徑 (無切刃)" value="0.0" />
                  <Field label="直徑補正號碼" value="1" />
                  <Field label="刀長補正號碼" value="1" />
                  <Field label="進給速率" value="750.0" />
                  <Field label="下刀速率" value="200.0" />
                  <Field label="提刀速率" value="1000.0" />
                  <Field label="主軸轉速" value="6000" />
                  <Field label="刀刃數量" value="2" plain />
                  <Field label="材料表面速率%" value="0.0" />
                  <Field label="每刃切削量%" value="0.0" />
                </div>
                <div className="ml-[10px] flex w-[138px] shrink-0 flex-col items-start pt-[10px]">
                  <fieldset className="w-full rounded-[3px] border border-[#d5dfe5] px-[4px] pt-[3px] pb-[6px]">
                    <legend className="ml-px px-[2px] leading-[14px]">材質</legend>
                    <Select label="材質" value="高速鋼-HSS" w="w-[129px]" raised />
                  </fieldset>
                  <fieldset className="mt-[2px] flex h-[35px] w-full gap-[14px] rounded-[3px] border border-[#d5dfe5] px-[5px] pt-[1px]">
                    <legend className="px-[2px] leading-[14px]">主軸旋轉方向</legend>
                    {["順時針", "逆時針"].map((t, k) => (
                      <label key={t} className="flex h-4 items-center gap-1 leading-4">
                        <input type="radio" name="spin" defaultChecked={k === 0} className="h-3 w-3 appearance-none rounded-full border border-[#7f8284] bg-[radial-gradient(#c9ccd0,#f4f4f4)] checked:bg-[radial-gradient(#1d7ba8_35%,#0f3d58_50%,#f4f4f4_56%)]" />
                        {t}
                      </label>
                    ))}
                  </fieldset>
                  <button className={`mt-5 ml-4 h-[19px] w-[100px] text-center leading-4 ${BTN}`}>Coolant... (*)</button>
                  <div className="mt-[22px] ml-4"><Check label="英制" /></div>
                </div>
              </div>
              <div className="flex">
                <div className="flex-1"><Field label="刀具檔案名稱" value={"C:\\USERS\\PUBLIC\\DOCUMENTS"} wide plain /></div>
                <button className={`ml-[2px] h-[17px] w-[58px] overflow-hidden text-left whitespace-nowrap leading-[14px] ${BTN}`}>選取(L)...</button>
              </div>
              <Field label="刀具名稱" value="    .2" wide plain />
              <Field label="製造商刀具代碼" value="" wide plain />
              <Field label="夾頭" value="" wide plain />
            </div>
          </div>
          <div className="mt-[21px] ml-[12px] flex flex-1 flex-col gap-[6px]">
            <button className={`h-[21px] leading-4 ${BTN}`}>計算轉速/進給(A)</button>
            <button className={`h-[21px] leading-4 ${BTN}`}>儲存至刀庫(S)...</button>
          </div>
        </div>
        <div className="mt-[14px] mb-[11px] flex justify-end gap-[7px] pr-[13px]">
          <ActionBtn kind="ok" /><ActionBtn kind="cancel" /><ActionBtn kind="help" />
        </div>
      </div>
    </section>
  );
}

/* ---------- coolant window ---------- */

function Coolant() {
  const rows = ["Flood", "Mist", "Thru-tool", ...[1, 2, 3, 4, 5, 6, 7].map((n) => `Custom option ${n}`)];
  return (
    <section className="absolute top-[508px] left-[958px] w-[364px] rounded-[7px] border border-[#c2c6ca] bg-[linear-gradient(to_bottom,transparent_0,transparent_28px,#6d7073_29px,#c9cbcd_105px,#0b0e12_106px,#0b0e12_100%),linear-gradient(to_right,#7c7f82,#707376_20%,#0b0f14_50%,#2a2d31_65%,#6f7275_90%)] px-[5px] pb-[5px]">
      <div className="flex h-[27px] items-start justify-between">
        <h2 className="mt-[3px] rounded-full bg-[#9a9c9e]/60 pr-2 pl-px text-[13px] leading-5 font-[Open_Sans] text-[#111] shadow-[0_0_6px_3px_rgba(154,156,158,0.5)]">Coolant...</h2>
        <button aria-label="close" className="mr-[-2px] flex h-[19px] w-[49px] items-center justify-center rounded-b-[4px] border border-t-0 border-[#e5b8b0] bg-[linear-gradient(to_bottom,#d98b80,#c5594a_50%,#a81f10_50%,#c83a20)] pb-[2px]"><CloseX /></button>
      </div>
      <div className="border border-[#8b969c] bg-[#efefef] pt-[10px]">
        <div className="flex flex-col gap-1">
          {rows.map((r, k) => (
            <div key={r} className="flex h-5 items-center pl-[22px]">
              <span className="w-[136px] leading-4">{r}</span>
              <Select label={r} value={k === 1 ? "On" : "忽略"} w="w-[72px]" raised={k === 0} />
              <span className="w-[21px]" />
              <Select label={`${r} timing`} value={k === 1 ? "之後" : "之前"} w="w-[72px]" raised={k === 0} disabled={k !== 1} />
            </div>
          ))}
        </div>
        <div className="mt-[30px] mb-[11px] flex justify-end gap-2 pr-[12px]">
          <ActionBtn kind="ok" /><ActionBtn kind="cancel" /><ActionBtn kind="help" />
        </div>
      </div>
    </section>
  );
}

/* ---------- left dock and operations panel ---------- */

const Grip = () => <span className="mx-auto my-[5px] h-[2px] w-[22px] bg-[repeating-linear-gradient(to_right,#b0b0b0_0_2px,#efefef_2px_5px)]" />;
const DLine = ({ tight }) => <span className={`mx-auto h-px w-[19px] bg-[#808080] ${tight ? "my-[3px]" : "my-1"}`} />;
const DGroup = ({ children }) => <div className="flex flex-col border-b border-[#8f8f8f] bg-[#efefef]">{children}</div>;
const DIcon = ({ n, on }) => (
  <button aria-label={n} className={`mx-auto flex h-[22px] w-[23px] items-center justify-center ${on ? "rounded-[3px] border border-[#555] bg-[#dcdcdc]" : ""}`}><I n={n} size={17} /></button>
);

function Dock() {
  return (
    <aside className="w-[30px] shrink-0 border-r border-[#8f8f8f] bg-[#d3daed]">
      <DGroup><Grip />{["d1", "d2", "d3", "d4", "d5", "d6"].map((n) => <DIcon key={n} n={n} />)}<span className="h-[3px]" /></DGroup>
      <DGroup><Grip /><DIcon n="e1" on /><DLine tight />{["e2", "e3", "e4", "e5", "e6"].map((n) => <DIcon key={n} n={n} />)}<DLine tight /><DIcon n="e7" /><span className="h-[3px]" /></DGroup>
      <DGroup><Grip /><DIcon n="f1" /><DIcon n="f2" /><DLine />{["f3", "f4", "f5", "f6", "f7"].map((n) => <DIcon key={n} n={n} />)}<DLine tight /><DIcon n="f8" /><span className="h-[4px]" /></DGroup>
    </aside>
  );
}

const BlockArrow = ({ d, w, h, at, sw }) => (
  <svg width={w} height={h} viewBox={`0 0 ${w} ${h}`} className={`pointer-events-none absolute ${at}`} aria-hidden="true">
    <path d={d} fill="none" stroke="#3f48cc" strokeWidth={sw} strokeLinejoin="round" />
  </svg>
);

function StatusBar() {
  const b = "h-[21px] shrink-0 rounded-[3px] border border-[#adadad] bg-[#f2f2f2] text-center leading-[18px] whitespace-nowrap overflow-hidden";
  return (
    <footer className="relative flex h-[26px] shrink-0 items-center justify-end gap-[5px] overflow-hidden border-t-2 border-b-2 border-t-[#9a9a9a] border-b-[#48688e] bg-[#efecec] text-[12px] text-black">
      <button className={`${b} w-[25px]`}>3D</button>
      <button className={`${b} w-[62px]`}>屏幕視角</button>
      <button className={`${b} w-[34px]`}>平面a</button>
      <div className="flex shrink-0">
        <label htmlFor="zdepth" className={`${b} w-[14px]`}>Z</label>
        <span className="flex h-[21px] w-[91px] items-center border border-[#ccc] bg-white">
          <span className="bg-[#3f93e8] pl-px leading-[19px] text-white">0.0</span>
          <input id="zdepth" aria-label="Z depth" className="h-[19px] w-[50px] bg-[#ffff80] outline-none" />
          <span className="mt-1 ml-auto pr-1"><Tri /></span>
        </span>
      </div>
      <div className="flex shrink-0">
        <button className="h-[21px] w-[32px] bg-[#00f800] text-center leading-5">10</button>
        <button aria-label="color" className="flex h-[21px] w-4 items-center justify-center border border-[#adadad] bg-white"><svg width="9" height="10" viewBox="0 0 9 10"><path d="M0 0H9L4.500 10Z" /></svg></button>
      </div>
      <div className="flex shrink-0">
        <button className={`${b} w-[31px]`}>層別</button>
        <span className="relative block w-[106px]"><input aria-label="level" defaultValue="1" className="h-[21px] w-full bg-white pl-[3px] outline-none" /><span className="absolute top-[10px] right-1"><Tri /></span></span>
      </div>
      <button className={`${b} w-[32px]`}>屬性</button>
      <button aria-label="point style" className="flex h-[21px] w-[37px] shrink-0 items-center justify-between bg-white px-[3px]"><svg width="10" height="10" viewBox="0 0 10 10"><path d="M5 0V10M0 5H10M2 9 8 2" stroke="#000" /></svg><Tri /></button>
      <button aria-label="line style" className="flex h-[21px] w-[62px] shrink-0 items-center bg-white px-[2px]"><span className="h-[3px] w-10 bg-black" /></button>
      <button aria-label="line width" className="flex h-[21px] w-[70px] shrink-0 items-center bg-white px-[2px]"><span className="h-px w-10 bg-black" /></button>
      <button className={`${b} w-[41px]`}>WCS</button>
      <button className={`${b} w-[50px]`}>群組別</button>
      <button aria-label="more" className={`${b} w-3`} />
      <button className={`${b} w-[14px]`}>?</button>
      <span className="absolute right-[18px] bottom-0 flex items-center font-[DejaVu_Sans] text-[18px] leading-[22px] whitespace-nowrap text-white [-webkit-text-stroke:1px_#e02020]">三维网www.3dportal.cn</span>
    </footer>
  );
}

export default function App() {
  return (
    <div className="flex h-screen w-full flex-col overflow-hidden bg-black font-['Noto_Sans_CJK_TC',sans-serif] text-[12px] text-black">
      <TopBars />
      <main className="relative flex min-h-0 flex-1">
        <Dock />
        <aside className="flex w-[302px] shrink-0 flex-col border-r-4 border-[#a8adb3] bg-[#efefef] p-[4px] pb-[7px]">
          <div className="flex flex-1 flex-col justify-end border border-[#828790] bg-white p-px">
            <HScroll thumb="w-[246px]" end="w-[17px]" />
          </div>
        </aside>
        <div className="relative min-w-0 flex-1 bg-black">
          <svg width="60" height="50" viewBox="0 0 60 50" className="absolute bottom-8 left-8" aria-hidden="true">
            <path d="M9 22V41" stroke="#2faa3c" strokeWidth="1.300" />
            <path d="M9 41H28" stroke="#b32020" strokeWidth="1.300" />
            <text x="5" y="15" fontSize="11" fill="#2faa3c" fontFamily="Liberation Sans">Y</text>
            <text x="36" y="44" fontSize="11" fill="#d02020" fontFamily="Liberation Sans">X</text>
          </svg>
          <p className="absolute bottom-2 left-2 flex gap-[10px] leading-5 text-[#c8c8c8]"><span>屏幕視角:俯檢視</span><span>WCS:俯檢視</span><span>刀具/繪圖平面:俯檢視</span></p>
          <div className="absolute right-[25px] bottom-[7px] w-[97px] text-center">
            <div className="relative h-[18px] border-b border-[#9a3a28] leading-[18px] text-[#3fd03f]">9.28568152</div>
            <div className="h-[18px] pr-[22px] leading-4 text-[#c8c8c8]">公制</div>
            <span className="absolute top-[6px] left-0 h-6 w-px bg-[#9a3a28]" />
            <span className="absolute top-[6px] right-0 h-6 w-px bg-[#9a3a28]" />
          </div>
        </div>
        <div className="contents [font-feature-settings:'hwid']">
          <ToolManager />
          <DefineTool />
          <Coolant />
        </div>
        <BlockArrow at="top-[466px] left-[511px]" w={58} h={40} sw={5} d="M5 19 27 5V11H49V28H27V34Z" />
        <p className="absolute top-[476px] left-[567px] text-[15px] leading-6 text-[#d0303a]">按右鍵編緝刀具</p>
        <BlockArrow at="top-[175px] left-[1420px]" w={150} h={60} sw={5} d="M7 29 74 6V17H142V41H74V53Z" />
        <div className="absolute top-[167px] left-[1575px] h-[99px] w-56 bg-white text-[15px] leading-6">會出現這個視窗，再選Coolant</div>
        <BlockArrow at="top-[565px] left-[1333px]" w={146} h={74} sw={5} d="M7 36 73 7V22H139V52H73V67Z" />
        <div className="absolute top-[573px] left-[1513px] text-[15px] leading-[25px] text-white">
          <p>再設定預設值是要噴氣或噴油。</p><p>Flood=油</p><p>Mist =氣</p>
        </div>
      </main>
      <StatusBar />
    </div>
  );
}
